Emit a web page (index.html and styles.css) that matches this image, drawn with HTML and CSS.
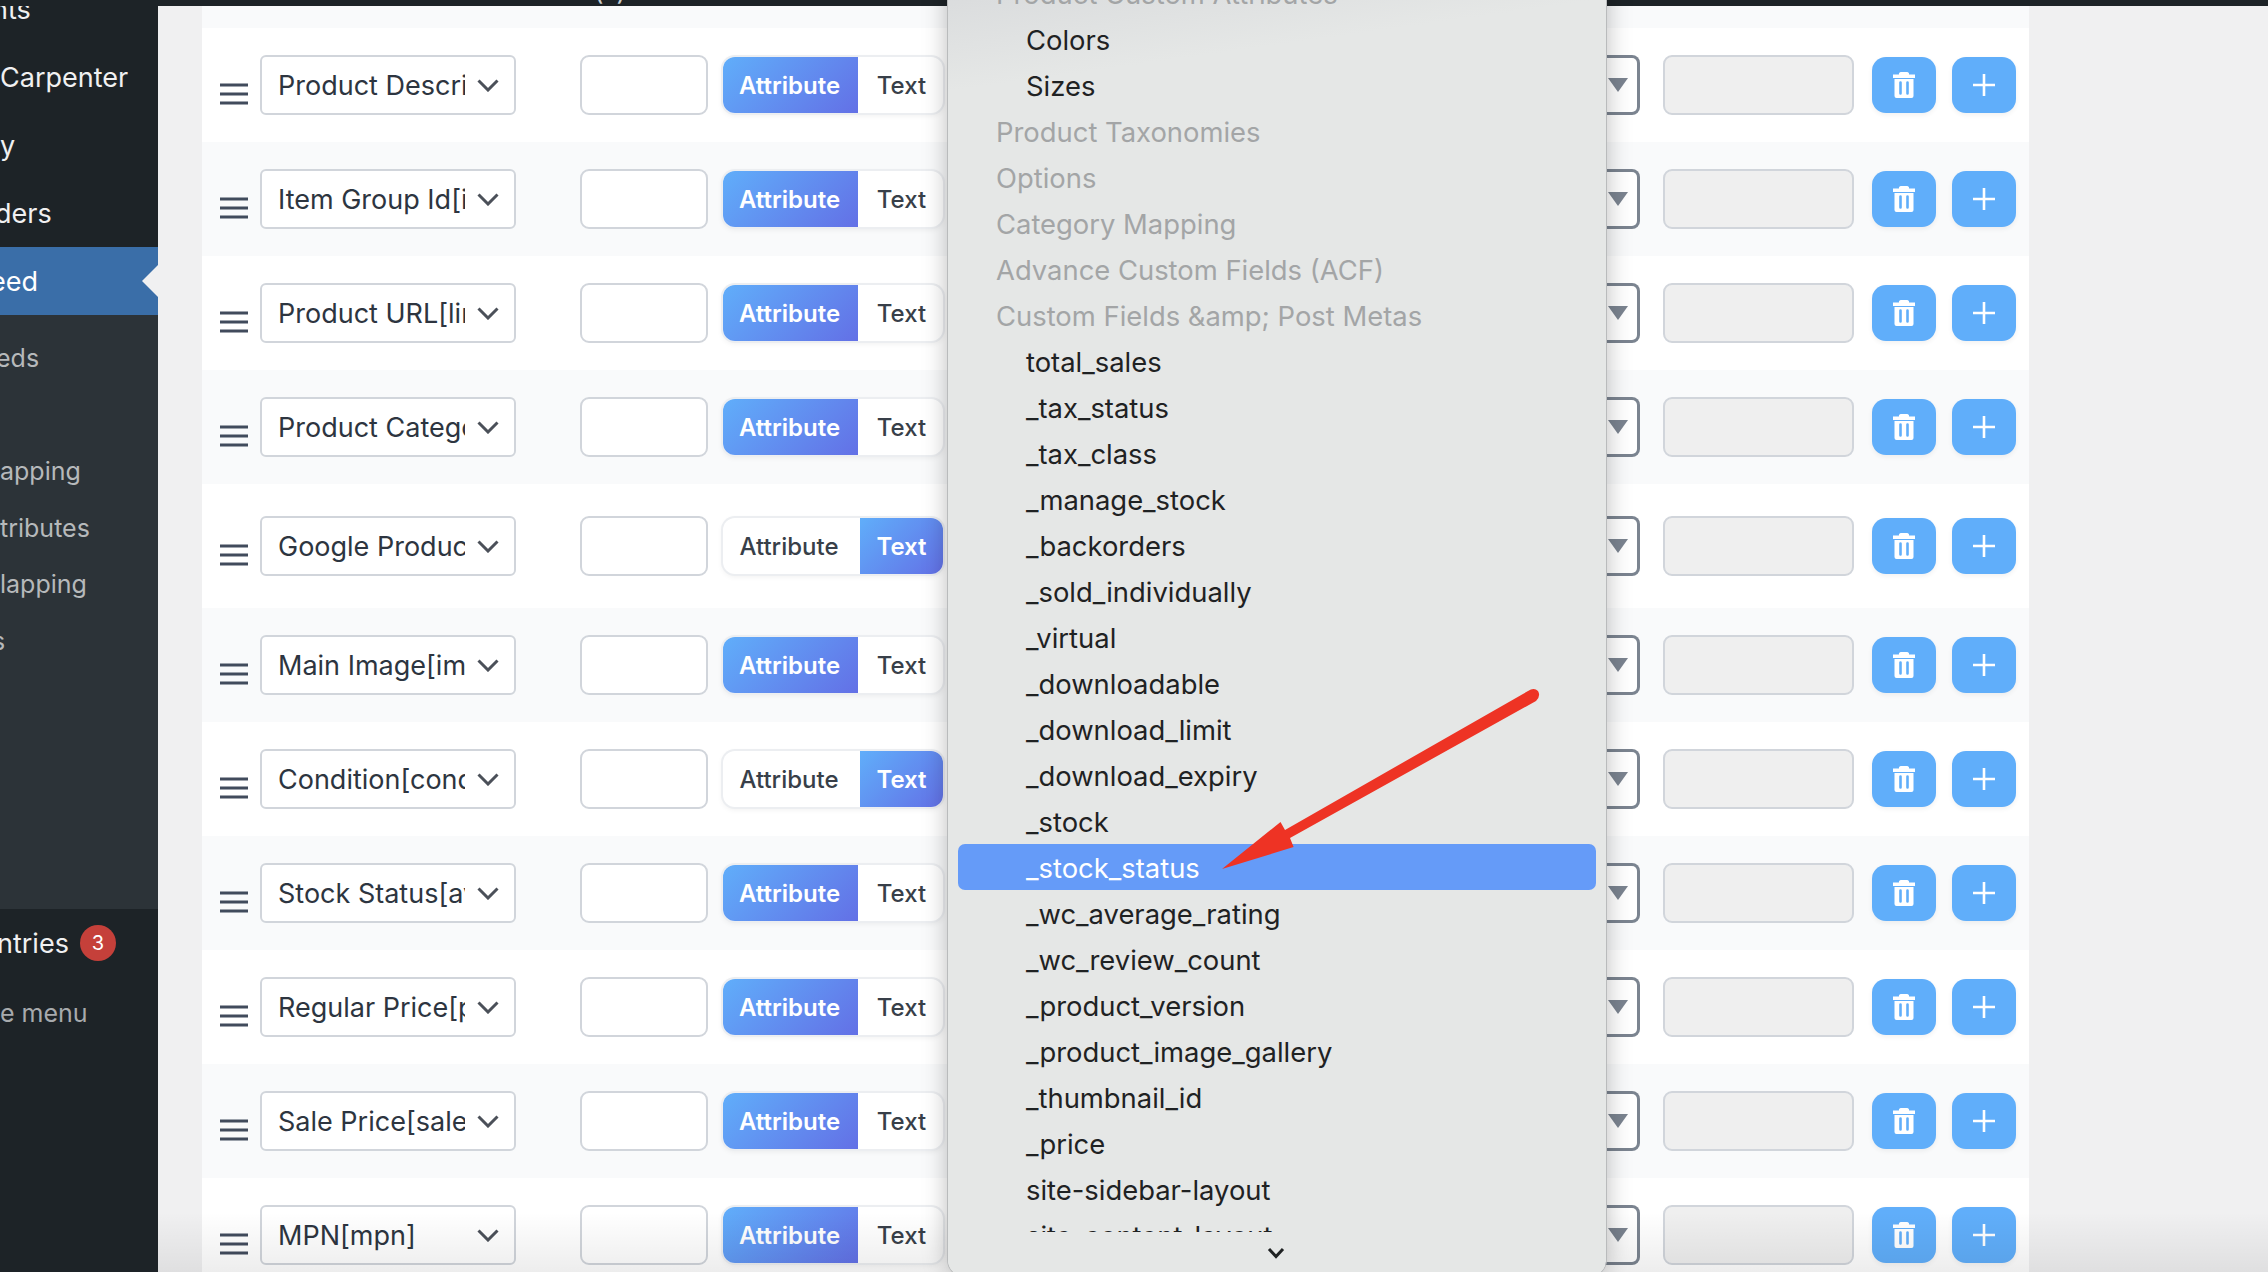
FILE: index.html
```html
<!DOCTYPE html>
<html lang="en">
<head>
<meta charset="utf-8">
<title>Feed attribute mapping</title>
<link rel="stylesheet" href="styles.css">
</head>
<body>
<svg class="defs" width="0" height="0" aria-hidden="true">
  <defs>
    <symbol id="burger" viewBox="0 0 28 22"><path d="M0 2h28M0 11h28M0 20h28" stroke="#414b5c" stroke-width="3.200" fill="none"/></symbol>
    <symbol id="chev" viewBox="0 0 22 13"><path d="M1.500 1.500 11 11 20.500 1.500" stroke="#4b5059" stroke-width="3" fill="none"/></symbol>
    <symbol id="trash" viewBox="0 0 22 26"><path d="M8 0h6a2 2 0 0 1 2 2.500h6V6H0V2.500h6A2 2 0 0 1 8 0ZM1.500 7h19v17a2 2 0 0 1-2 2h-15a2 2 0 0 1-2-2Z" fill="#fff"/><path d="M7.500 10.500v11M14.500 10.500v11" stroke="#60aefa" stroke-width="2.600" stroke-linecap="round"/></symbol>
    <symbol id="plus" viewBox="0 0 24 24"><path d="M12 1v22M1 12h22" stroke="#fff" stroke-width="2.600" fill="none"/></symbol>
  </defs>
</svg>
<div class="topbar"><span class="topmark">(*)</span></div>
<div class="layout">
  <nav class="sidebar">
    <div class="menu-top">
      <div class="mi"><span class="cut-8">nts</span></div>
      <div class="mi"><span>Carpenter</span></div>
      <div class="mi"><span>y</span></div>
      <div class="mi"><span class="cut-5">ders</span></div>
      <div class="mi mi-active"><span class="cut-10">eed</span></div>
    </div>
    <div class="submenu">
      <div class="si"><span class="cut-4">eds</span></div>
      <div class="si"></div>
      <div class="si"><span>apping</span></div>
      <div class="si"><span>tributes</span></div>
      <div class="si"><span>lapping</span></div>
      <div class="si"><span class="cut-8">s</span></div>
    </div>
    <div class="menu-bottom">
      <div class="mi"><span class="cut-3">ntries</span><b class="badge">3</b></div>
      <div class="mi mi-muted"><span>e menu</span></div>
    </div>
  </nav>
  <main class="main">
    <div class="rows">
      <div class="row row-head"></div>

      <div class="row row-white">
        <svg class="burger"><use href="#burger"/></svg>
        <div class="sel"><span class="sel-text">Product Description[description]</span><svg class="chev"><use href="#chev"/></svg></div>
        <div class="prefix"></div>
        <div class="toggle"><span class="tg tg-attr on">Attribute</span><span class="tg tg-text">Text</span></div>
        <div class="native"><i class="tri"></i></div>
        <div class="disabled"></div>
        <div class="btn"><svg class="ic-trash"><use href="#trash"/></svg></div>
        <div class="btn"><svg class="ic-plus"><use href="#plus"/></svg></div>
      </div>

      <div class="row row-grey">
        <svg class="burger"><use href="#burger"/></svg>
        <div class="sel"><span class="sel-text">Item Group Id[item_group_id]</span><svg class="chev"><use href="#chev"/></svg></div>
        <div class="prefix"></div>
        <div class="toggle"><span class="tg tg-attr on">Attribute</span><span class="tg tg-text">Text</span></div>
        <div class="native"><i class="tri"></i></div>
        <div class="disabled"></div>
        <div class="btn"><svg class="ic-trash"><use href="#trash"/></svg></div>
        <div class="btn"><svg class="ic-plus"><use href="#plus"/></svg></div>
      </div>

      <div class="row row-white">
        <svg class="burger"><use href="#burger"/></svg>
        <div class="sel"><span class="sel-text">Product URL[link]</span><svg class="chev"><use href="#chev"/></svg></div>
        <div class="prefix"></div>
        <div class="toggle"><span class="tg tg-attr on">Attribute</span><span class="tg tg-text">Text</span></div>
        <div class="native"><i class="tri"></i></div>
        <div class="disabled"></div>
        <div class="btn"><svg class="ic-trash"><use href="#trash"/></svg></div>
        <div class="btn"><svg class="ic-plus"><use href="#plus"/></svg></div>
      </div>

      <div class="row row-grey">
        <svg class="burger"><use href="#burger"/></svg>
        <div class="sel"><span class="sel-text">Product Category[product_type]</span><svg class="chev"><use href="#chev"/></svg></div>
        <div class="prefix"></div>
        <div class="toggle"><span class="tg tg-attr on">Attribute</span><span class="tg tg-text">Text</span></div>
        <div class="native"><i class="tri"></i></div>
        <div class="disabled"></div>
        <div class="btn"><svg class="ic-trash"><use href="#trash"/></svg></div>
        <div class="btn"><svg class="ic-plus"><use href="#plus"/></svg></div>
      </div>

      <div class="row row-white row-tall">
        <svg class="burger"><use href="#burger"/></svg>
        <div class="sel"><span class="sel-text">Google Product Category</span><svg class="chev"><use href="#chev"/></svg></div>
        <div class="prefix"></div>
        <div class="toggle"><span class="tg tg-attr">Attribute</span><span class="tg tg-text on">Text</span></div>
        <div class="native"><i class="tri"></i></div>
        <div class="disabled"></div>
        <div class="btn"><svg class="ic-trash"><use href="#trash"/></svg></div>
        <div class="btn"><svg class="ic-plus"><use href="#plus"/></svg></div>
      </div>

      <div class="row row-grey">
        <svg class="burger"><use href="#burger"/></svg>
        <div class="sel"><span class="sel-text">Main Image[image_link]</span><svg class="chev"><use href="#chev"/></svg></div>
        <div class="prefix"></div>
        <div class="toggle"><span class="tg tg-attr on">Attribute</span><span class="tg tg-text">Text</span></div>
        <div class="native"><i class="tri"></i></div>
        <div class="disabled"></div>
        <div class="btn"><svg class="ic-trash"><use href="#trash"/></svg></div>
        <div class="btn"><svg class="ic-plus"><use href="#plus"/></svg></div>
      </div>

      <div class="row row-white">
        <svg class="burger"><use href="#burger"/></svg>
        <div class="sel"><span class="sel-text">Condition[condition]</span><svg class="chev"><use href="#chev"/></svg></div>
        <div class="prefix"></div>
        <div class="toggle"><span class="tg tg-attr">Attribute</span><span class="tg tg-text on">Text</span></div>
        <div class="native"><i class="tri"></i></div>
        <div class="disabled"></div>
        <div class="btn"><svg class="ic-trash"><use href="#trash"/></svg></div>
        <div class="btn"><svg class="ic-plus"><use href="#plus"/></svg></div>
      </div>

      <div class="row row-grey">
        <svg class="burger"><use href="#burger"/></svg>
        <div class="sel"><span class="sel-text">Stock Status[availability]</span><svg class="chev"><use href="#chev"/></svg></div>
        <div class="prefix"></div>
        <div class="toggle"><span class="tg tg-attr on">Attribute</span><span class="tg tg-text">Text</span></div>
        <div class="native"><i class="tri"></i></div>
        <div class="disabled"></div>
        <div class="btn"><svg class="ic-trash"><use href="#trash"/></svg></div>
        <div class="btn"><svg class="ic-plus"><use href="#plus"/></svg></div>
      </div>

      <div class="row row-white">
        <svg class="burger"><use href="#burger"/></svg>
        <div class="sel"><span class="sel-text">Regular Price[price]</span><svg class="chev"><use href="#chev"/></svg></div>
        <div class="prefix"></div>
        <div class="toggle"><span class="tg tg-attr on">Attribute</span><span class="tg tg-text">Text</span></div>
        <div class="native"><i class="tri"></i></div>
        <div class="disabled"></div>
        <div class="btn"><svg class="ic-trash"><use href="#trash"/></svg></div>
        <div class="btn"><svg class="ic-plus"><use href="#plus"/></svg></div>
      </div>

      <div class="row row-grey">
        <svg class="burger"><use href="#burger"/></svg>
        <div class="sel"><span class="sel-text">Sale Price[sale_price]</span><svg class="chev"><use href="#chev"/></svg></div>
        <div class="prefix"></div>
        <div class="toggle"><span class="tg tg-attr on">Attribute</span><span class="tg tg-text">Text</span></div>
        <div class="native"><i class="tri"></i></div>
        <div class="disabled"></div>
        <div class="btn"><svg class="ic-trash"><use href="#trash"/></svg></div>
        <div class="btn"><svg class="ic-plus"><use href="#plus"/></svg></div>
      </div>

      <div class="row row-white">
        <svg class="burger"><use href="#burger"/></svg>
        <div class="sel"><span class="sel-text">MPN[mpn]</span><svg class="chev"><use href="#chev"/></svg></div>
        <div class="prefix"></div>
        <div class="toggle"><span class="tg tg-attr on">Attribute</span><span class="tg tg-text">Text</span></div>
        <div class="native"><i class="tri"></i></div>
        <div class="disabled"></div>
        <div class="btn"><svg class="ic-trash"><use href="#trash"/></svg></div>
        <div class="btn"><svg class="ic-plus"><use href="#plus"/></svg></div>
      </div>
    </div>
  </main>
</div>
<div class="bottom-fade"></div>

<div class="popup">
  <ul class="list">
    <li class="group">Product Custom Attributes</li>
    <li>Colors</li>
    <li>Sizes</li>
    <li class="group">Product Taxonomies</li>
    <li class="group">Options</li>
    <li class="group">Category Mapping</li>
    <li class="group">Advance Custom Fields (ACF)</li>
    <li class="group">Custom Fields &amp;amp; Post Metas</li>
    <li>total_sales</li>
    <li>_tax_status</li>
    <li>_tax_class</li>
    <li>_manage_stock</li>
    <li>_backorders</li>
    <li>_sold_individually</li>
    <li>_virtual</li>
    <li>_downloadable</li>
    <li>_download_limit</li>
    <li>_download_expiry</li>
    <li>_stock</li>
    <li class="picked">_stock_status</li>
    <li>_wc_average_rating</li>
    <li>_wc_review_count</li>
    <li>_product_version</li>
    <li>_product_image_gallery</li>
    <li>_thumbnail_id</li>
    <li>_price</li>
    <li>site-sidebar-layout</li>
    <li>site-content-layout</li>
  </ul>
  <svg class="more" viewBox="0 0 18 12"><path d="M2 2 9 9.500 16 2" stroke="#1f2223" stroke-width="3" fill="none"/></svg>
</div>

<svg class="arrow" viewBox="0 0 330 190" aria-hidden="true">
  <path d="M2 186 60.500 139 65 147 308 8Q314 4 318 8 321 13 316 18L70 155 73.600 164Z" fill="#ee3324"/>
</svg>
</body>
</html>
```
FILE: styles.css
```css
* { box-sizing: border-box; }
html, body { margin: 0; padding: 0; }
body {
  width: 2268px;
  height: 1272px;
  overflow: hidden;
  position: relative;
  background: #f0f0f1;
  font-family: Inter, "Noto Sans", sans-serif;
}
.defs { position: absolute; }

.topbar {
  position: relative;
  z-index: 2;
  height: 6px;
  background: #1d2327;
  overflow: hidden;
}
.topmark {
  position: absolute;
  left: 594px;
  top: -24px;
  color: #c9ccce;
  font-size: 26px;
  line-height: 30px;
}

.layout { display: flex; height: 1266px; }

/* sidebar */
.sidebar {
  width: 158px;
  flex: none;
  margin-top: -31px;
  background: #1d2327;
  overflow: hidden;
  color: #f0f0f1;
  font-size: 27px;
}
.mi {
  height: 68px;
  display: flex;
  align-items: center;
  gap: 11px;
  white-space: nowrap;
}
.cut-3 { margin-left: -3px; }
.cut-4 { margin-left: -4px; }
.cut-5 { margin-left: -5px; }
.cut-8 { margin-left: -8px; }
.cut-10 { margin-left: -10px; }
.mi-active {
  position: relative;
  background: #3a6ea8;
  color: #fff;
}
.mi-active::after {
  content: "";
  position: absolute;
  right: 0;
  top: 18px;
  border-style: solid;
  border-width: 16px 16px 16px 0;
  border-color: transparent #f0f0f1 transparent transparent;
}
.mi-muted { color: #a7aaad; font-size: 25px; padding-top: 3px; }
.submenu {
  height: 594px;
  padding-top: 15px;
  background: #2c3338;
  color: #b6b9bb;
  font-size: 25px;
}
.si { height: 56.500px; display: flex; align-items: center; white-space: nowrap; }
.badge {
  width: 36px;
  height: 36px;
  border-radius: 50%;
  background: #c5403a;
  color: #fff;
  font-size: 20px;
  font-weight: 400;
  display: flex;
  align-items: center;
  justify-content: center;
}

/* main rows */
.main { flex: 1; padding-left: 44px; }
.rows { width: 1827px; }
.row {
  height: 114px;
  display: flex;
  align-items: center;
  padding-left: 18px;
}
.row-head { height: 22px; background: #f9fafb; }
.row-white { background: #fff; }
.row-grey { background: #f9fafb; }
.row-tall { height: 124px; }

.burger { width: 28px; height: 22px; margin-top: 18px; flex: none; }
.sel {
  width: 256px;
  height: 60px;
  margin-left: 12px;
  flex: none;
  background: #fff;
  border: 2px solid #d1d5db;
  border-radius: 6px;
  padding-left: 16px;
  display: flex;
  align-items: center;
}
.sel-text {
  width: 187px;
  overflow: hidden;
  white-space: nowrap;
  color: #2d3540;
  font-size: 27px;
}
.chev { width: 22px; height: 13px; margin-left: 12px; flex: none; }

.prefix {
  width: 128px;
  height: 60px;
  margin-left: 64px;
  flex: none;
  background: #fff;
  border: 2px solid #d1d5db;
  border-radius: 9px;
}
.toggle {
  width: 220px;
  height: 56px;
  margin-left: 15px;
  flex: none;
  display: flex;
  border-radius: 12px;
  background: #fff;
  box-shadow: 0 0 0 2px #eceef1, 0 2px 6px rgba(0, 0, 0, .08);
}
.tg {
  display: flex;
  align-items: center;
  justify-content: center;
  color: #383f49;
  font-size: 24px;
  font-weight: 500;
}
.tg-attr { width: 134px; border-radius: 12px 0 0 12px; padding-right: 2px; }
.tg-text { width: 83px; margin-left: 3px; border-radius: 0 12px 12px 0; }
.tg.on {
  background: linear-gradient(135deg, #60aefa, #6370e6);
  color: #fff;
  font-weight: 600;
}
.tg-attr.on { width: 135px; }
.tg-attr.on + .tg-text { margin-left: 2px; }

.native {
  width: 139px;
  height: 60px;
  margin-left: 558px;
  flex: none;
  background: #fff;
  border: 3px solid #7b8490;
  border-left: 0;
  border-radius: 0 8px 8px 0;
  display: flex;
  align-items: center;
  justify-content: flex-end;
  padding-right: 9px;
}
.tri {
  width: 0;
  height: 0;
  border-style: solid;
  border-width: 14px 10px 0 10px;
  border-color: #7b8490 transparent transparent transparent;
}
.disabled {
  width: 191px;
  height: 60px;
  margin-left: 23px;
  flex: none;
  background: #efefef;
  border: 2px solid #d1d5db;
  border-radius: 9px;
}
.btn {
  width: 64px;
  height: 56px;
  margin-left: 18px;
  flex: none;
  border-radius: 14px;
  background: #60aefa;
  box-shadow: 0 2px 5px rgba(0, 0, 0, .06);
  display: flex;
  align-items: center;
  justify-content: center;
}
.btn + .btn { margin-left: 16px; }
.ic-trash { width: 22px; height: 26px; }
.ic-plus { width: 24px; height: 24px; }

.bottom-fade {
  position: absolute;
  left: 158px;
  right: 0;
  bottom: 0;
  height: 60px;
  background: linear-gradient(rgba(0, 0, 0, 0), rgba(0, 0, 0, .07));
  pointer-events: none;
}

/* popup */
.popup {
  position: absolute;
  z-index: 3;
  left: 948px;
  top: -40px;
  width: 658px;
  height: 1316px;
  padding: 10px 10px 0;
  border-radius: 16px;
  background: linear-gradient(172deg, #d6d8da 0, #e5e7e6 130px);
  box-shadow: 0 0 0 1px #b9bbbc, 0 0 26px rgba(0, 0, 0, .28);
}
.list {
  list-style: none;
  margin: 0;
  padding: 0;
  height: 1262px;
  overflow: hidden;
}
.list li {
  height: 46px;
  padding: 2px 0 0 68px;
  display: flex;
  align-items: center;
  color: #1f2223;
  font-size: 27.400px;
  white-space: nowrap;
  border-radius: 7px;
}
.list .group { padding-left: 38px; color: #a3a5a6; }
.list .picked { background: #659bf8; color: #fff; }
.more {
  position: absolute;
  left: 319px;
  top: 1287px;
  width: 18px;
  height: 12px;
}
.arrow {
  position: absolute;
  z-index: 4;
  left: 1220px;
  top: 683px;
  width: 330px;
  height: 190px;
}
```
